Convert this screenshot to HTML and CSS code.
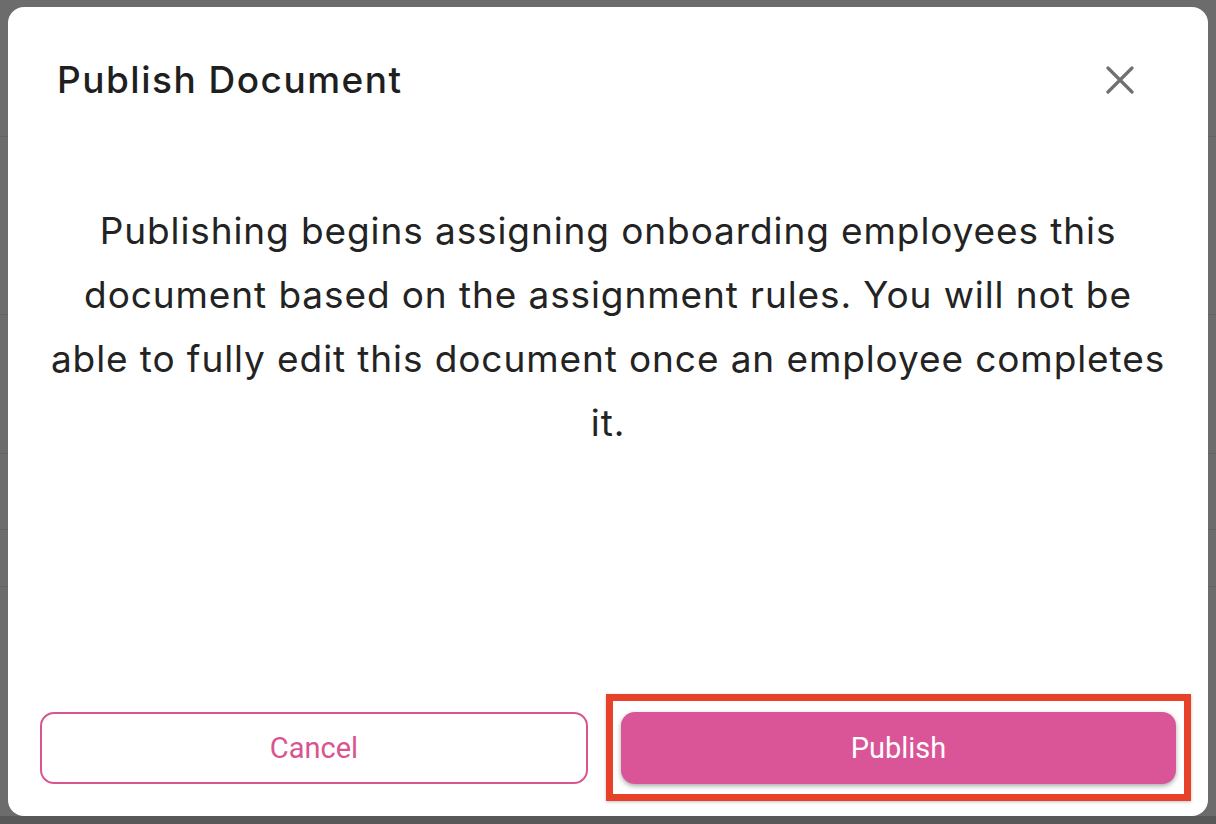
FILE: index.html
```html
<!DOCTYPE html>
<html lang="en">
<head>
<meta charset="utf-8">
<title>Publish Document</title>
<link rel="stylesheet" href="styles.css">
</head>
<body>
<div class="backdrop">
  <div class="rows">
    <div class="row r1"></div>
    <div class="row r2"></div>
    <div class="row r3"></div>
    <div class="row r4"></div>
    <div class="row r5"></div>
  </div>
  <div class="footer-strip"></div>
</div>
<div class="dialog" role="dialog" aria-labelledby="dlg-title">
  <header class="dialog-header">
    <h2 id="dlg-title" class="dialog-title">Publish Document</h2>
    <button class="close-btn" aria-label="Close">
      <svg width="28" height="28" viewBox="0 0 28 28" aria-hidden="true">
        <path d="M2 2 L26 26 M26 2 L2 26" stroke="#707070" stroke-width="3.2" stroke-linecap="round" fill="none"/>
      </svg>
    </button>
  </header>
  <div class="dialog-body">
    <p class="dialog-text">Publishing begins assigning onboarding employees this document based on the assignment rules. You will not be able to fully edit this document once an employee completes it.</p>
  </div>
  <footer class="dialog-footer">
    <button class="btn btn-outline">Cancel</button>
    <div class="primary-wrap">
      <button class="btn btn-primary">Publish</button>
      <span class="highlight" aria-hidden="true"></span>
    </div>
  </footer>
</div>
</body>
</html>
```
FILE: styles.css
```css
* { box-sizing: border-box; }
html, body { margin: 0; padding: 0; }
body {
  width: 1216px;
  height: 824px;
  overflow: hidden;
  background: #6c6c6c;
  font-family: Inter, "Noto Sans", sans-serif;
  position: relative;
}
.backdrop {
  position: absolute;
  inset: 0;
  display: flex;
  flex-direction: column;
}
.rows {
  flex: 1;
  display: flex;
  flex-direction: column;
}
.row { border-bottom: 1px solid #626262; }
.r1 { height: 137px; }
.r2 { height: 178px; }
.r3 { height: 139px; }
.r4 { height: 76px; }
.r5 { height: 57px; }
.footer-strip { height: 8px; background: #585858; }

.dialog {
  position: absolute;
  left: 8px;
  top: 7px;
  width: 1200px;
  height: 809px;
  background: #ffffff;
  border-radius: 16px;
  display: flex;
  flex-direction: column;
  padding: 0 32px 32px;
}
.dialog-header {
  display: flex;
  align-items: center;
  justify-content: space-between;
  padding: 51px 42px 0 17px;
}
.dialog-title {
  margin: 0;
  font-size: 37px;
  font-weight: 500;
  color: #1f1f1f;
  line-height: 44px;
  letter-spacing: 1.5px;
}
.close-btn {
  border: 0;
  background: none;
  padding: 0;
  width: 28px;
  height: 28px;
  display: flex;
  cursor: pointer;
}
.dialog-body {
  flex: 1;
  padding: 97px 8px 0;
}
.dialog-text {
  margin: 0;
  text-align: center;
  font-size: 37px;
  line-height: 64px;
  color: #232323;
  font-weight: 400;
  letter-spacing: 0.9px;
}
.dialog-footer {
  display: flex;
  gap: 33px;
  align-items: stretch;
}
.btn {
  height: 72px;
  border-radius: 14px;
  font-family: Roboto, "Liberation Sans", sans-serif;
  font-size: 29px;
  font-weight: 400;
  cursor: pointer;
}
.btn-outline {
  width: 548px;
  flex: none;
  background: #fff;
  border: 2px solid #d9558f;
  color: #d9558f;
}
.primary-wrap {
  flex: 1;
  position: relative;
  display: flex;
}
.btn-primary {
  flex: 1;
  border: 0;
  background: #da5597;
  color: #ffffff;
  box-shadow: 0 2px 5px rgba(0,0,0,0.35);
}
.highlight {
  position: absolute;
  left: -15px;
  right: -15px;
  top: -18px;
  bottom: -17px;
  border: 7.5px solid #e8412a;
  box-shadow: 0 1px 3px rgba(0,0,0,0.25);
  pointer-events: none;
}
```
